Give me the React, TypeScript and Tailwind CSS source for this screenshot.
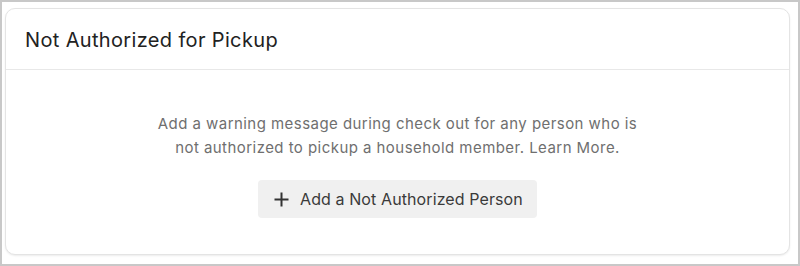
import React from "react";

export default function App() {
  return (
    <div
      className="w-[800px] h-[266px] bg-white border-2 border-[#c8c8c8] pt-[6px] pl-[3px] pr-[8px] pb-[7px]"
      style={{ fontFamily: "Inter, 'Noto Sans', sans-serif" }}
    >
      <div className="h-[247px] w-[785px] rounded-[10px] border border-[#e4e4e4] bg-white shadow-[0_1px_2px_rgba(0,0,0,0.08)] flex flex-col">
        <div className="h-[61px] border-b border-[#e8e8e8] flex items-center pl-[19px] pt-[1px]">
          <h2 className="text-[20px] text-[#222] font-normal tracking-[0.35px]">Not Authorized for Pickup</h2>
        </div>
        <div className="flex flex-col items-center pt-[42px]">
          <p className="text-[15px] leading-[24px] text-[#6f6f6f] text-center w-[500px] tracking-[0.45px]">
            Add a warning message during check out for any person who is not authorized to pickup a household member. Learn More.
          </p>
          <button className="mt-[20px] h-[38px] w-[279px] rounded-[4px] bg-[#f0f0f0] flex items-center pl-[15px] gap-[10px] text-[16px] text-[#3a3a3a] tracking-[0.1px]">
            <svg width="17" height="17" viewBox="0 0 17 17" fill="none">
              <path d="M8.5 1.5V15.5M1.5 8.5H15.5" stroke="#333" strokeWidth="2" />
            </svg>
            <span>Add a Not Authorized Person</span>
          </button>
        </div>
      </div>
    </div>
  );
}
